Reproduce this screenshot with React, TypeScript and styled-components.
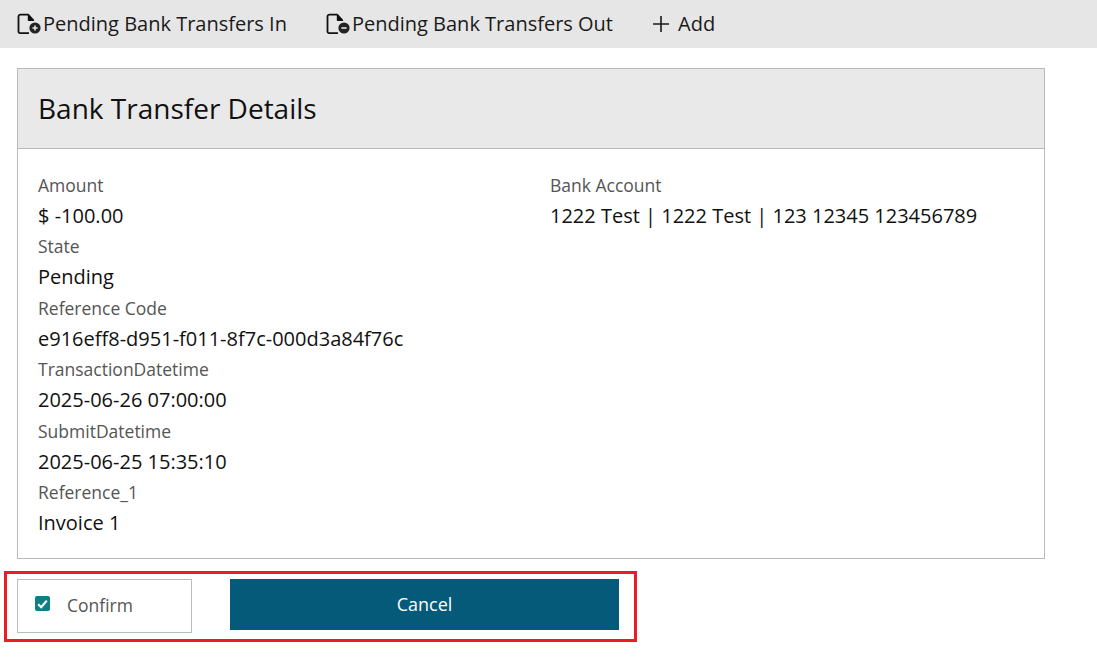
import React from 'react';
import styled, { createGlobalStyle } from 'styled-components';

const GlobalStyle = createGlobalStyle`
  html, body {
    margin: 0;
    background: #fff;
    font-family: "Open Sans", "Liberation Sans", sans-serif;
    color: #111;
  }
`;

const details = [
  { label: 'Amount', value: '$ -100.00' },
  { label: 'State', value: 'Pending' },
  { label: 'Reference Code', value: 'e916eff8-d951-f011-8f7c-000d3a84f76c' },
  { label: 'TransactionDatetime', value: '2025-06-26 07:00:00' },
  { label: 'SubmitDatetime', value: '2025-06-25 15:35:10' },
  { label: 'Reference_1', value: 'Invoice 1' },
];

const FileBadgeIcon: React.FC<{ kind: 'plus' | 'minus' }> = ({ kind }) => (
  <svg width="26" height="24" viewBox="0 0 26 24">
    <path
      d="M11.5 2.6H3.5a2 2 0 0 0-2 2v15a1.5 1.5 0 0 0 1.5 1.5h9"
      fill="none"
      stroke="#111"
      strokeWidth="1.8"
    />
    <path d="M11.5 2.6l5 5.6h-5z" fill="#111" stroke="#111" strokeWidth="1.4" strokeLinejoin="round" />
    <circle cx="18" cy="16" r="5.6" fill="#222" />
    <path d={kind === 'plus' ? 'M15.4 16h5.2M18 13.4v5.2' : 'M15.4 16h5.2'} stroke="#e6e6e6" strokeWidth="1.6" />
  </svg>
);

const App: React.FC = () => (
  <>
    <GlobalStyle />
    <Toolbar>
      <ToolbarItem>
        <FileBadgeIcon kind="plus" />
        Pending Bank Transfers In
      </ToolbarItem>
      <ToolbarItem>
        <FileBadgeIcon kind="minus" />
        Pending Bank Transfers Out
      </ToolbarItem>
      <AddItem>
        <svg width="18" height="18" viewBox="0 0 18 18">
          <path d="M9 1v16M1 9h16" fill="none" stroke="#1a1a1a" strokeWidth="1.6" />
        </svg>
        Add
      </AddItem>
    </Toolbar>
    <Panel>
      <PanelHeader>Bank Transfer Details</PanelHeader>
      <PanelBody>
        <Column>
          {details.map((d) => (
            <Field key={d.label}>
              <Label>{d.label}</Label>
              <Value>{d.value}</Value>
            </Field>
          ))}
        </Column>
        <Column>
          <Field>
            <Label>Bank Account</Label>
            <Value>1222 Test | 1222 Test | 123 12345 123456789</Value>
          </Field>
        </Column>
      </PanelBody>
    </Panel>
    <Actions>
      <ConfirmBox>
        <CheckMark>
          <svg width="11" height="10" viewBox="0 0 11 10">
            <path d="M1.2 5.2l3 3L9.8 1.6" fill="none" stroke="#fff" strokeWidth="2.2" />
          </svg>
        </CheckMark>
        Confirm
      </ConfirmBox>
      <CancelButton>Cancel</CancelButton>
    </Actions>
  </>
);

const Toolbar = styled.div`
  display: flex;
  align-items: center;
  gap: 39px;
  height: 48px;
  padding-left: 17px;
  background: #e6e6e6;
`;

const ToolbarItem = styled.div`
  display: flex;
  align-items: center;
  font-size: 20px;
  line-height: 48px;
  color: #1a1a1a;
`;

const AddItem = styled(ToolbarItem)`
  gap: 8px;
`;

const Panel = styled.section`
  box-sizing: border-box;
  width: 1028px;
  height: 491px;
  margin: 20px 0 0 17px;
  border: 1px solid #b9b9b9;
`;

const PanelHeader = styled.h2`
  box-sizing: border-box;
  height: 80px;
  margin: 0;
  padding-left: 20px;
  border-bottom: 1px solid #b9b9b9;
  background: #e9e9e9;
  font-size: 28px;
  font-weight: 400;
  line-height: 78px;
  color: #111;
`;

const PanelBody = styled.div`
  display: grid;
  grid-template-columns: 512px 1fr;
  padding: 20.6px 20px 0;
`;

const Column = styled.div`
  display: flex;
  flex-direction: column;
`;

const Field = styled.div`
  display: flex;
  flex-direction: column;
  height: 61.5px;
`;

const Label = styled.div`
  margin-bottom: 0.6px;
  font-size: 17.5px;
  line-height: 30.4px;
  color: #555;
`;

const Value = styled.div`
  font-size: 20px;
  line-height: 30px;
  color: #111;
`;

const Actions = styled.div`
  box-sizing: border-box;
  display: flex;
  align-items: flex-start;
  gap: 38px;
  width: 633px;
  height: 71px;
  margin: 12px 0 0 4px;
  padding: 5px 0 0 10px;
  border: 3px solid #ed1c24;
`;

const ConfirmBox = styled.label`
  box-sizing: border-box;
  display: flex;
  align-items: center;
  gap: 17px;
  width: 175px;
  height: 54px;
  padding: 0 0 3px 17px;
  border: 1px solid #bcbcbc;
  font-size: 17.5px;
  color: #555;
`;

const CheckMark = styled.span`
  display: flex;
  align-items: center;
  justify-content: center;
  width: 15px;
  height: 15px;
  margin-bottom: 2px;
  border-radius: 2px;
  background: #0f7f86;
`;

const CancelButton = styled.button`
  width: 389px;
  height: 51px;
  padding: 0 0 2px;
  border: none;
  background: #045a78;
  font-family: inherit;
  font-size: 18px;
  color: #fff;
`;

export default App;
